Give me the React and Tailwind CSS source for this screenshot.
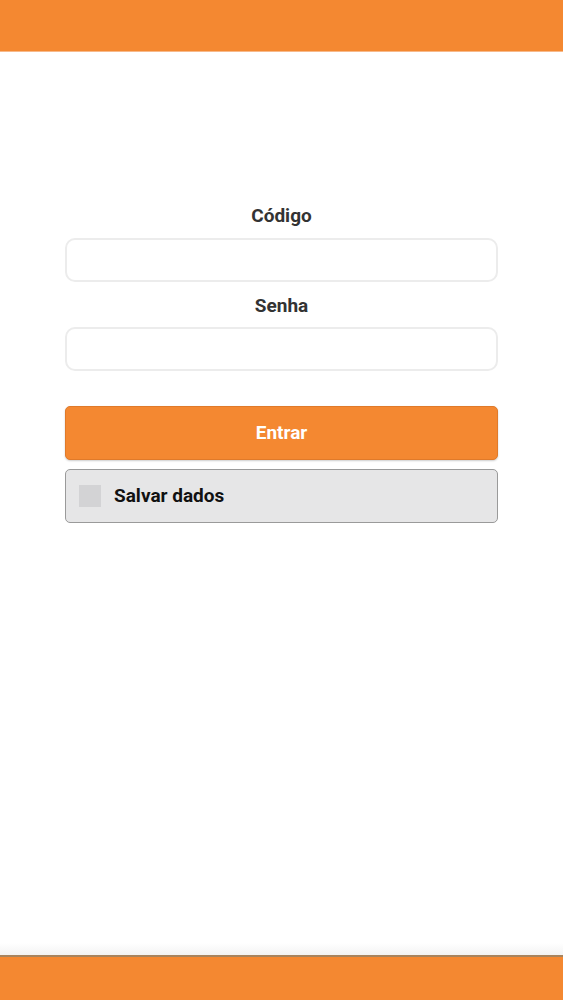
import React, { useState } from 'react';

export default function App() {
  const [codigo, setCodigo] = useState('');
  const [senha, setSenha] = useState('');
  const [salvar, setSalvar] = useState(false);

  return (
    <div className="relative w-full h-[1000px] bg-white flex flex-col font-['Roboto',sans-serif]">
      {/* barra superior */}
      <div className="h-[52px] bg-[#f48831] border-b border-[#f7b98a]" />

      <div className="flex-1 px-[65px] pt-[153px]">
        <div className="flex flex-col items-center">
          <label className="text-[19px] font-bold text-[#333] leading-[22px] mb-[11px]">Código</label>
          <input
            value={codigo}
            onChange={e => setCodigo(e.target.value)}
            className="w-full h-[44px] rounded-[10px] border-2 border-[#ececec] bg-white px-3 outline-none"
          />
          <label className="text-[19px] font-bold text-[#333] leading-[22px] mt-[13px] mb-[10px]">Senha</label>
          <input
            type="password"
            value={senha}
            onChange={e => setSenha(e.target.value)}
            className="w-full h-[44px] rounded-[10px] border-2 border-[#ececec] bg-white px-3 outline-none"
          />
        </div>

        <button className="mt-[35px] w-full h-[54px] rounded-[5px] bg-[#f48831] border border-[#e07a2a] shadow-[0_1px_2px_rgba(0,0,0,0.2)] text-white text-[19px] font-bold">
          Entrar
        </button>

        <div
          className="mt-[9px] w-full h-[54px] rounded-[5px] bg-[#e6e6e7] border border-[#9a9a9a] flex items-center px-[13px] gap-[13px] cursor-pointer"
          onClick={() => setSalvar(s => !s)}
        >
          <div className={`w-[22px] h-[22px] ${salvar ? 'bg-[#f48831]' : 'bg-[#d3d3d5]'}`} />
          <span className="text-[19px] font-bold text-[#111]">Salvar dados</span>
        </div>
      </div>

      {/* barra inferior */}
      <div className="h-[12px] bg-gradient-to-b from-white to-[#f3f3f3]" />
      <div className="h-[45px] bg-[#f48831] border-t-2 border-[#a8845e]" />
    </div>
  );
}
